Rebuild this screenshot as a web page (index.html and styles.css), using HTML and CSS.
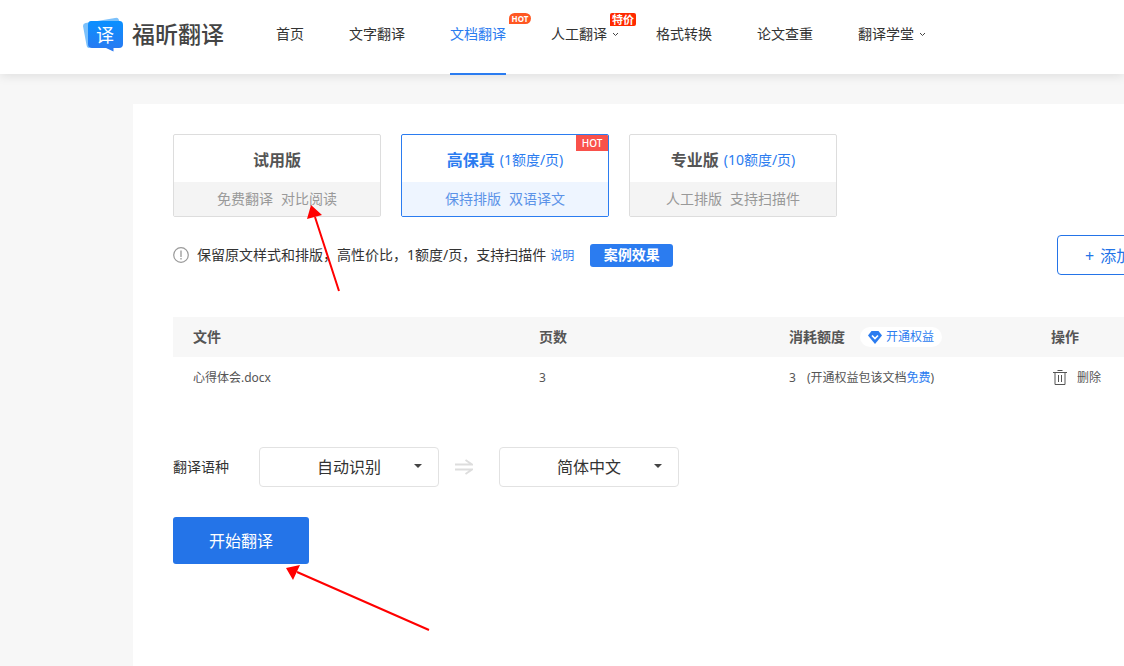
FILE: index.html
```html
<!DOCTYPE html>
<html lang="zh-CN">
<head>
<meta charset="utf-8">
<title>福昕翻译</title>
<link rel="stylesheet" href="styles.css">
</head>
<body>
<header class="header">
  <a class="logo" href="#">
    <svg class="logo-mark" width="42" height="36" viewBox="0 0 42 36" aria-hidden="true">
      <defs><linearGradient id="mark" x1="0" y1="0" x2="0" y2="1"><stop offset="0" stop-color="#0a90ff"/><stop offset="1" stop-color="#2b78f0"/></linearGradient></defs>
      <path d="M2.500 6 32 1Q35 0 36 3L37 8 6 31Q4 31 3.500 28L0 9Q0 6.500 2.500 6Z" fill="#7cc1fb"/>
      <path d="M8 4H36.500Q40 4 40 8V27Q40 31 36 31H30.500V34.500L23 31H9Q5 31 5 27V8Q5 4 8 4Z" fill="url(#mark)"/>
    </svg>
    <span class="logo-char">译</span>
    <span class="logo-name">福昕翻译</span>
  </a>
  <nav class="nav">
    <a class="nav-item" href="#">首页</a>
    <a class="nav-item" href="#">文字翻译</a>
    <a class="nav-item nav-item-active" href="#">文档翻译
      <span class="tag tag-hot">HOT</span>
    </a>
    <a class="nav-item nav-item-menu" href="#">人工翻译
      <svg class="chevron" width="7" height="5" viewBox="0 0 7 5" aria-hidden="true"><path d="M1 1 3.500 3.500 6 1" fill="none" stroke="#444"/></svg>
      <span class="tag tag-sale">特价</span>
    </a>
    <a class="nav-item" href="#">格式转换</a>
    <a class="nav-item" href="#">论文查重</a>
    <a class="nav-item nav-item-menu" href="#">翻译学堂
      <svg class="chevron" width="7" height="5" viewBox="0 0 7 5" aria-hidden="true"><path d="M1 1 3.500 3.500 6 1" fill="none" stroke="#444"/></svg>
    </a>
  </nav>
</header>
<main class="panel">
  <div class="plans">
    <button class="plan" type="button">
      <span class="plan-title"><b>试用版</b></span>
      <span class="plan-desc"><span>免费翻译</span><span>对比阅读</span></span>
    </button>
    <button class="plan plan-selected" type="button">
      <span class="plan-title"><b>高保真</b><span class="plan-price">(1额度/页)</span></span>
      <span class="plan-desc"><span>保持排版</span><span>双语译文</span></span>
      <span class="plan-flag">HOT</span>
    </button>
    <button class="plan" type="button">
      <span class="plan-title"><b>专业版</b><span class="plan-price">(10额度/页)</span></span>
      <span class="plan-desc"><span>人工排版</span><span>支持扫描件</span></span>
    </button>
  </div>
  <div class="info">
    <svg class="info-icon" width="16" height="16" viewBox="0 0 16 16" aria-hidden="true"><circle cx="8" cy="8" r="7.300" fill="none" stroke="#999" stroke-width="1.200"/><path d="M8 3.500V10M8 11V12.500" stroke="#999" stroke-width="1.300"/></svg>
    <span>保留原文样式和排版，高性价比，1额度/页，支持扫描件</span>
    <a class="info-link" href="#">说明</a>
    <button class="demo" type="button">案例效果</button>
    <button class="add" type="button"><span>+</span><span>添加</span></button>
  </div>
  <table class="files">
    <colgroup><col class="col-file"><col class="col-pages"><col class="col-quota"><col></colgroup>
    <thead>
      <tr>
        <th scope="col">文件</th>
        <th scope="col">页数</th>
        <th scope="col"><div class="quota">消耗额度
          <a class="benefit" href="#"><svg width="14" height="13" viewBox="0 0 14 13" aria-hidden="true"><path d="M3.500 0H10.500L14 4.500 7 13 0 4.500Z" fill="#2b7cf0"/><path d="M4 4.500 7 7.500 10 4.500" fill="none" stroke="#fff" stroke-width="1.700"/></svg>开通权益</a></div></th>
        <th scope="col">操作</th>
      </tr>
    </thead>
    <tbody>
      <tr>
        <td>心得体会.docx</td>
        <td>3</td>
        <td><div class="cost"><span>3</span><span>(开通权益包该文档<a class="free" href="#">免费</a>)</span></div></td>
        <td><button class="delete" type="button"><svg width="14" height="16" viewBox="0 0 14 16" aria-hidden="true"><path d="M0 2.500H14M4.500 .500H9.500M2 2.500V14.500H12V2.500M5.500 5V12M8.500 5V12" fill="none" stroke="#555"/></svg>删除</button></td>
      </tr>
    </tbody>
  </table>
  <div class="languages">
    <label class="languages-label" for="source">翻译语种</label>
    <div class="picker">
      <select id="source"><option>自动识别</option></select>
      <svg class="caret" width="8" height="4" viewBox="0 0 8 4" aria-hidden="true"><path d="M0 0H8L4 4Z" fill="#444"/></svg>
    </div>
    <svg class="direction" width="18" height="16" viewBox="0 0 18 16" aria-hidden="true"><path d="M0 5.500H17L10.500 1M0 10.500H17L10.500 15" fill="none" stroke="#ddd" stroke-width="1.800"/></svg>
    <div class="picker">
      <select id="target" aria-label="目标语种"><option>简体中文</option></select>
      <svg class="caret" width="8" height="4" viewBox="0 0 8 4" aria-hidden="true"><path d="M0 0H8L4 4Z" fill="#444"/></svg>
    </div>
  </div>
  <button class="start" type="button">开始翻译</button>
</main>
<svg class="pointers" width="440" height="640" viewBox="0 0 440 640" aria-hidden="true">
  <path d="M315 217 339 291M297 572 429 630" fill="none" stroke="#f00" stroke-width="2"/>
  <path d="M311 205 322 215 307 219ZM286 568 300 565 293 580Z" fill="#f00"/>
</svg>
</body>
</html>
```

FILE: styles.css
```css
* { box-sizing: border-box; }
body {
  margin: 0;
  position: relative;
  min-height: 100vh;
  display: flex;
  flex-direction: column;
  overflow: hidden;
  background: #f7f7f7;
  color: #333;
  font: 14px/20px "Noto Sans", "Noto Sans CJK SC", sans-serif;
}
a { color: inherit; text-decoration: none; }
button, select { font: inherit; color: inherit; cursor: pointer; }
svg { flex: none; }

.header {
  position: relative;
  display: flex;
  padding-left: 83px;
  background: #fff;
  box-shadow: 0 2px 10px rgba(0, 0, 0, .1);
}
.logo {
  position: relative;
  display: flex;
  align-items: center;
  gap: 7px;
  height: 68px;
  margin-right: 52px;
}
.logo-mark { margin-top: 2px; }
.logo-char {
  position: absolute;
  left: 13px;
  top: 25px;
  color: #fff;
  font-size: 18px;
}
.logo-name { font-size: 23px; line-height: 36px; font-weight: 500; color: #444; }
.nav { display: flex; gap: 45px; }
.nav-item {
  position: relative;
  height: 75px;
  margin-bottom: -1px;
  padding-top: 24px;
  white-space: nowrap;
}
.nav-item-active { color: #2b7cf0; border-bottom: 2px solid #2b7cf0; }
.nav-item-menu { padding-right: 4px; }
.chevron { position: absolute; left: 61px; top: 32px; }
.tag {
  position: absolute;
  color: #fff;
  font-weight: 700;
  text-align: center;
}
.tag-hot {
  left: 59px;
  top: 13px;
  width: 22px;
  background: #ff5722;
  border-radius: 6px 6px 6px 0;
  font-size: 8px;
  line-height: 11px;
}
.tag-sale {
  left: 59px;
  top: 13px;
  width: 26px;
  background: #ff2a00;
  border-radius: 2px 2px 2px 0;
  font-size: 11px;
  line-height: 13px;
}

.panel {
  flex: 1;
  min-width: 1100px;
  margin: 30px 0 0 133px;
  padding: 30px 40px;
  background: #fff;
}
.plans { display: flex; gap: 20px; }
.plan {
  position: relative;
  width: 208px;
  padding: 0;
  border: 1px solid #ddd;
  border-radius: 2px;
  background: #fff;
  color: #999;
  overflow: hidden;
}
.plan-title {
  display: flex;
  justify-content: center;
  align-items: center;
  gap: 5px;
  height: 47px;
  padding-top: 2px;
  color: #555;
  font-size: 16px;
}
.plan-price { color: #2b7cf0; font-size: 14px; }
.plan-desc {
  display: flex;
  justify-content: center;
  align-items: center;
  gap: 8px;
  height: 34px;
  background: #f4f4f4;
}
.plan-selected { border-color: #2b7cf0; color: #5c93e8; }
.plan-selected .plan-title { color: #2b7cf0; }
.plan-selected .plan-desc { background: #eef5ff; }
.plan-flag {
  position: absolute;
  top: 0;
  right: 0;
  width: 32px;
  background: #f9514b;
  color: #fff;
  font-size: 10px;
  font-weight: 500;
  line-height: 16px;
}

.info { display: flex; align-items: center; margin-top: 18px; white-space: nowrap; }
.info-icon { margin-right: 8px; }
.info-link { margin-left: 4px; padding-top: 1px; color: #2b7cf0; font-size: 12px; }
.demo {
  width: 83px;
  height: 23px;
  margin-left: 16px;
  padding: 0;
  border: 0;
  border-radius: 3px;
  background: #2b7cf0;
  color: #fff;
  font-weight: 700;
}
.add {
  display: flex;
  align-items: center;
  gap: 6px;
  width: 136px;
  height: 40px;
  margin-left: auto;
  padding: 2px 0 0 27px;
  border: 1px solid #2474e8;
  border-radius: 4px;
  background: #fff;
  color: #2474e8;
  font-size: 16px;
}

.files {
  width: 100%;
  margin-top: 42px;
  border-collapse: collapse;
  table-layout: fixed;
  color: #555;
  font-size: 12px;
  text-align: left;
}
.col-file { width: 366px; }
.col-pages { width: 250px; }
.col-quota { width: 262px; }
.files th, .files td { height: 40px; padding: 0 0 0 20px; }
.files td { padding-top: 2px; }
.files td:nth-child(n+2), .files th:nth-child(n+2) { padding-left: 0; }
.files th { background: #f7f7f7; font-size: 14px; }
.quota { display: flex; align-items: center; gap: 15px; }
.benefit {
  display: flex;
  align-items: center;
  gap: 4px;
  padding: 0 8px;
  border-radius: 10px;
  background: #fff;
  color: #2b7cf0;
  font-size: 12px;
  font-weight: 400;
}
.cost { display: flex; gap: 11px; }
.free { color: #2b7cf0; }
.delete {
  display: flex;
  align-items: center;
  gap: 10px;
  padding: 0 2px;
  border: 0;
  background: none;
}

.languages { display: flex; align-items: center; margin-top: 50px; }
.languages-label { margin-right: 30px; }
.picker { position: relative; width: 180px; }
.picker select {
  display: block;
  width: 100%;
  height: 40px;
  padding: 0;
  appearance: none;
  border: 1px solid #e2e2e2;
  border-radius: 4px;
  background: #fff;
  font-size: 16px;
  text-align: center;
  text-align-last: center;
}
.caret { position: absolute; right: 17px; top: 17px; pointer-events: none; }
.direction { margin: 0 26px 0 16px; }
.start {
  display: block;
  width: 136px;
  height: 47px;
  margin-top: 30px;
  padding: 0;
  border: 0;
  border-radius: 3px;
  background: #2474e8;
  color: #fff;
  font-size: 16px;
}
.pointers { position: absolute; left: 0; top: 0; pointer-events: none; }
```
